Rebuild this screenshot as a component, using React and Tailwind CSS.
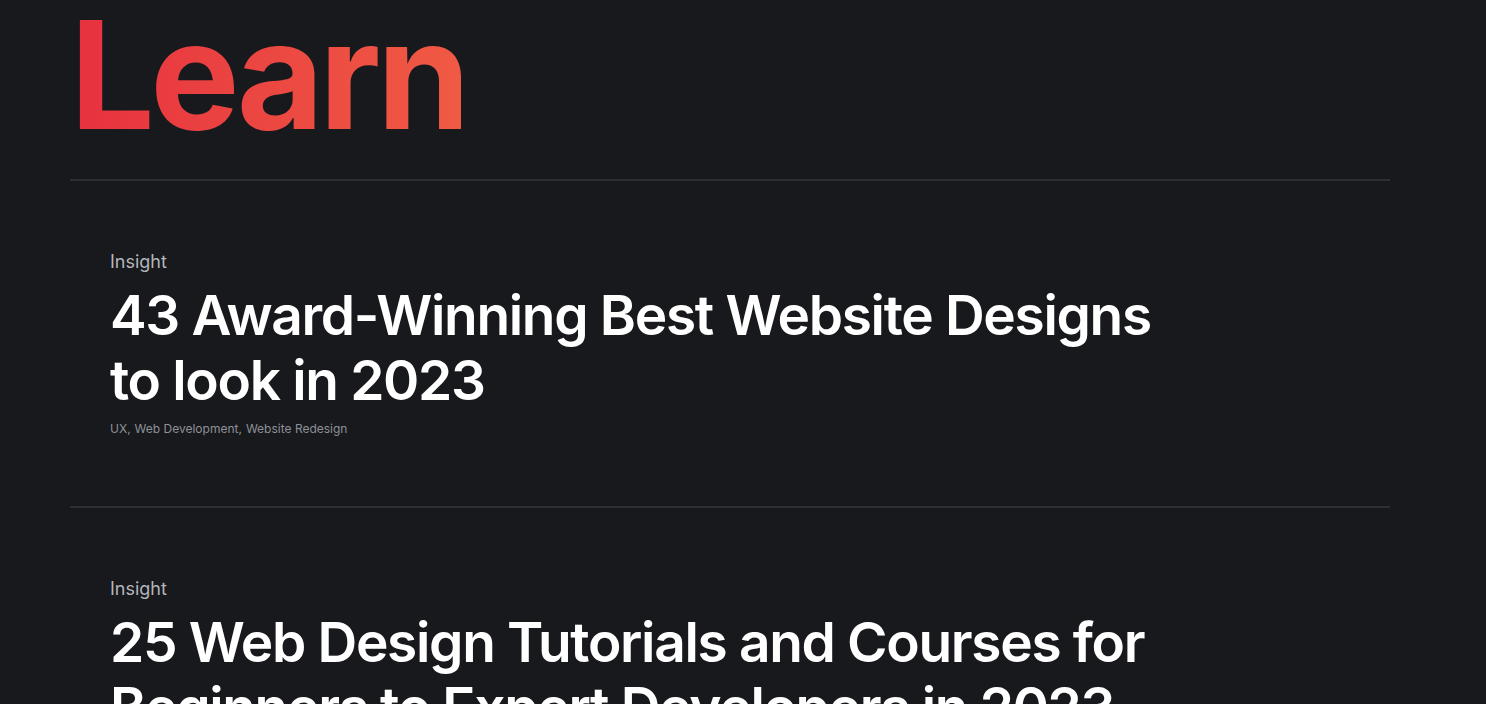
const posts = [
  {
    category: 'Insight',
    title: '43 Award-Winning Best Website Designs to look in 2023',
    tags: ['UX', 'Web Development', 'Website Redesign'],
  },
  {
    category: 'Insight',
    title: '25 Web Design Tutorials and Courses for Beginners to Expert Developers in 2023',
    tags: ['Web Design', 'Web Development'],
  },
]

function PostRow({ post }) {
  return (
    <article className="border-t-2 border-[#2e2f34] pl-10 pt-[67px] pb-[69px]">
      <div className="text-[18px] leading-7 text-[#b4b6bb]">{post.category}</div>
      <h2 className="mt-[7px] max-w-[1080px] text-[55px] font-semibold leading-[65px] tracking-[-0.024em] text-white">
        {post.title}
      </h2>
      <div className="mt-2 flex gap-1 text-xs text-[#8d9096]">
        {post.tags.map((tag, i) => (
          <span key={tag}>
            {tag}
            {i < post.tags.length - 1 ? ',' : ''}
          </span>
        ))}
      </div>
    </article>
  )
}

export default function App() {
  return (
    <div
      className="min-h-screen w-full bg-[#18191d] text-white"
      style={{ fontFamily: 'Inter, "Noto Sans", sans-serif' }}
    >
      <div className="mx-[70px] w-[1320px]">
        <h1 className="text-[150px] font-bold leading-none tracking-[-0.03em] bg-gradient-to-r from-[#e7303f] to-[#f05a44] bg-clip-text text-transparent w-fit">
          Learn
        </h1>
        <div className="mt-[29px]">
          {posts.map((post) => (
            <PostRow key={post.title} post={post} />
          ))}
        </div>
      </div>
    </div>
  )
}
